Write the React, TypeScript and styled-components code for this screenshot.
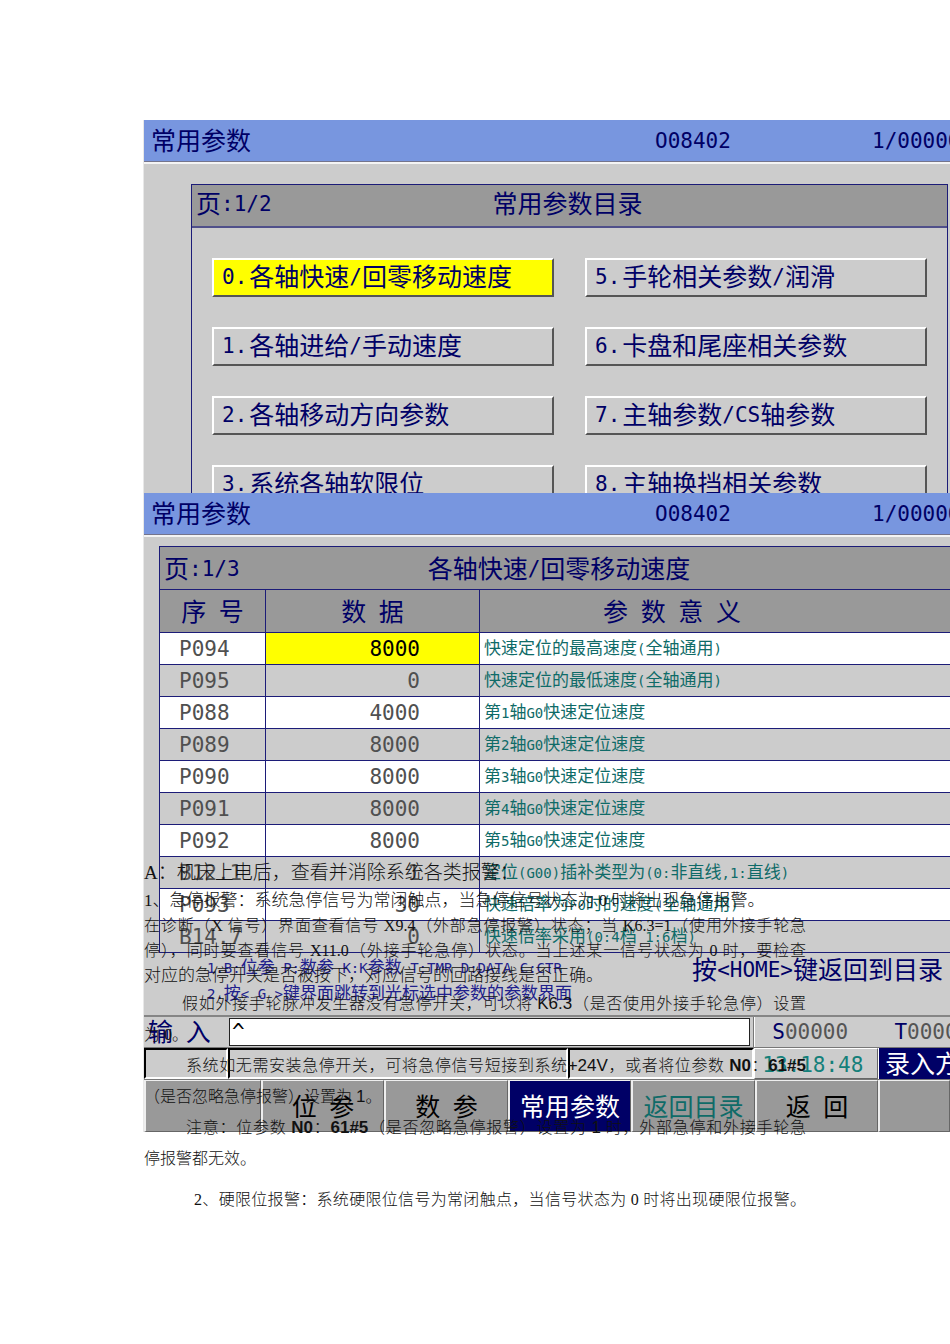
import React from "react";
import styled, { createGlobalStyle, css } from "styled-components";

const navy = "#000066";
const line = "#1c1c78";
const teal = "#0f6b68";
const face = "#cccccc";
const shade = "#999999";

const GlobalStyle = createGlobalStyle`
  *, *::before, *::after { box-sizing: border-box; }
  body { margin: 0; background: #fff; overflow-x: hidden; }
  h1, h2, p { margin: 0; font-weight: inherit; font-size: inherit; }
`;

const Page = styled.div`
  display: grid;
  padding: 120px 0 128px 143px;
  overflow: hidden;
`;

const Screens = styled.div`
  grid-area: 1 / 1;
  min-width: 0;
  color: ${navy};
  font-family: "Noto Sans CJK SC", sans-serif;
  font-size: 25px;
  line-height: 30px;
  white-space: pre;
`;

const Ascii = styled.span<{ $small?: boolean }>`
  font-family: "DejaVu Sans Mono", monospace;
  font-size: ${(p) => (p.$small ? 14 : 21)}px;
  line-height: 1;
  vertical-align: ${(p) => (p.$small ? 0 : 2)}px;
`;

function Lcd({ text, small }: { text: string; small?: boolean }) {
  return (
    <>
      {text.split(/([\x20-\x7e]+)/).map((part, i) =>
        i % 2 ? (
          <Ascii key={i} $small={small}>
            {part}
          </Ascii>
        ) : (
          part
        )
      )}
    </>
  );
}

const Screen = styled.section<{ $clipped?: boolean }>`
  overflow: hidden;
  background: ${face};
  border-left: 1px solid #e8e8e8;
  ${(p) => p.$clipped && css`height: 373px;`}
`;

const TitleBar = styled.header`
  display: grid;
  grid-template-columns: 504fr 217fr 78fr;
  align-items: center;
  height: 44px;
  padding: 0 0 4px 7px;
  background: #7896df;
  border-bottom: 2px solid #f4f4f4;
  box-shadow: inset 0 -1px #74748c;

  > * { min-width: 0; }
`;

const MenuFrame = styled.div`
  margin: 20px 2px 0 47px;
  border: 1px solid ${line};
`;

const MenuHead = styled.div`
  display: grid;
  grid-template-columns: 298fr 457fr;
  align-items: center;
  height: 43px;
  padding: 0 0 8px 4px;
  background: ${shade};
  border-bottom: 2px solid #50508a;
`;

const MenuGrid = styled.div`
  display: grid;
  grid-template-columns: 1fr 1fr;
  gap: 30px 31px;
  padding: 30px 20px;
`;

const MenuButton = styled.button<{ $active?: boolean }>`
  display: flex;
  align-items: center;
  gap: 2px;
  height: 39px;
  padding: 0 0 5px 8px;
  border: 2px solid;
  border-color: #fff #555 #555 #fff;
  background: ${(p) => (p.$active ? "#ffff00" : face)};
  color: ${navy};
  font: inherit;
  text-align: left;
  white-space: pre;
`;

const Table = styled.table`
  width: calc(100% - 15px);
  margin: 9px 0 0 15px;
  border-collapse: collapse;
  table-layout: fixed;

  th, td {
    padding: 0 0 3px;
    border: 1px solid ${line};
    font-weight: 400;
  }
  tr > :last-child { border-right: 0; }
`;

const HeadRow = styled.tr`
  height: 43px;
  background: ${shade};
`;

const TableTitle = styled.div`
  display: grid;
  grid-template-columns: 264fr 523fr;
  padding-left: 4px;
  text-align: left;
`;

const MeaningHead = styled.th`
  && { padding-right: 86px; }
`;

const DataRow = styled.tr`
  height: 32px;
  background: ${face};
  color: #505050;
  line-height: 24px;
  &:nth-child(odd) { background: #fff; }
`;

const IdCell = styled.td`
  && { padding-left: 19px; }
`;

const ValueCell = styled.td<{ $active?: boolean }>`
  && { padding-right: 59px; }
  text-align: right;
  ${(p) => p.$active && css`background: #ffff00; color: #000;`}
`;

const MeaningCell = styled.td`
  && { padding-left: 4px; }
  color: ${teal};
  font-size: 17px;
`;

const Hints = styled.div`
  display: flex;
  justify-content: space-between;
  height: 62px;
  padding: 0 7px 0 63px;
`;

const HintList = styled.div`
  color: #20208c;
  font-size: 17px;
  line-height: 26px;
`;

const EntryRow = styled.div`
  display: grid;
  grid-template-columns: 611fr 196fr;
  height: 32px;
  border-top: 2px solid #858585;
  line-height: 26px;
`;

const Entry = styled.label`
  display: grid;
  grid-template-columns: 81px 1fr;
  padding: 0 3px 0 4px;
  border-right: 1px solid #777;
`;

const EntryInput = styled.input`
  width: 100%;
  height: 28px;
  margin-top: 1px;
  padding: 0 2px;
  border: 1px solid #222;
  border-radius: 0;
  background: #fff;
  color: #000;
  font: 21px "DejaVu Sans Mono", monospace;
`;

const Codes = styled.div`
  display: grid;
  grid-template-columns: minmax(0, 123fr) minmax(0, 56fr);
  padding-left: 17px;
  border-left: 1px solid #fff;
`;

const Digits = styled.span`
  color: #555;
`;

const StatusRow = styled.div`
  display: grid;
  grid-template-columns: 84fr 341fr 186fr 124fr 72fr;
  height: 33px;
  border-top: 1px solid #777;
  border-bottom: 1px solid #777;

  > * { min-width: 0; }
`;

const Well = styled.div`
  border: 2px solid;
  border-color: #000 #fff #fff #000;
`;

const Clock = styled.div`
  padding-left: 7px;
  border: 1px solid;
  border-color: #fff #666 #666 #fff;
  color: #14807a;
  line-height: 28px;
`;

const Mode = styled.div`
  padding-left: 6px;
  overflow: hidden;
  background: ${navy};
  color: #fff;
  border-left: 1px solid #fff;
  line-height: 28px;
`;

const SoftKeys = styled.nav`
  display: grid;
  grid-template-columns: 117fr 123fr 124fr 123fr 124fr 123fr 72fr;
  height: 52px;
`;

const SoftKey = styled.button<{ $active?: boolean; $link?: boolean }>`
  min-width: 0;
  padding: 0 0 3px;
  border: solid;
  border-width: 1px 1px 1px 2px;
  border-color: #eee #666 #666 #eee;
  background: ${(p) => (p.$active ? navy : shade)};
  color: ${(p) => (p.$active ? "#fff" : p.$link ? teal : "#000")};
  font: inherit;
  white-space: pre;
`;

const Notes = styled.article`
  grid-area: 1 / 1;
  z-index: 1;
  min-width: 0;
  padding: 739px 144px 0 1px;
  color: #111;
  font-family: "Liberation Serif", "Noto Sans CJK SC", serif;
  font-weight: 300;
  pointer-events: none;
  white-space: nowrap;
`;

const NotesTitle = styled.h2`
  && { font-size: 19px; }
  height: 29px;
  line-height: 28px;
`;

const Tight = styled.p`
  && { font-size: 17px; }
  line-height: 25px;
`;

const Loose = styled.p<{ $indent?: number }>`
  && { font-size: 16px; }
  line-height: 31px;
  padding-left: ${(p) => p.$indent ?? 0}px;
`;

const Full = styled.span`
  display: block;
  font-size: 16px;
  text-align: justify;
  text-align-last: justify;
  white-space: normal;
`;

const Sans = styled.span`
  font-family: "Liberation Sans", "Noto Sans CJK SC", sans-serif;
  font-size: 17px;
`;

const StrongSans = styled(Sans)`
  font-weight: 700;
`;

const Last = styled(Loose)`
  margin-top: 10px;
`;

const menu = [
  ["0.", "各轴快速/回零移动速度"],
  ["5.", "手轮相关参数/润滑"],
  ["1.", "各轴进给/手动速度"],
  ["6.", "卡盘和尾座相关参数"],
  ["2.", "各轴移动方向参数"],
  ["7.", "主轴参数/CS轴参数"],
  ["3.", "系统各轴软限位"],
  ["8.", "主轴换挡相关参数"],
];

const rows = [
  ["P094", "8000", "快速定位的最高速度(全轴通用)"],
  ["P095", "0", "快速定位的最低速度(全轴通用)"],
  ["P088", "4000", "第1轴G0快速定位速度"],
  ["P089", "8000", "第2轴G0快速定位速度"],
  ["P090", "8000", "第3轴G0快速定位速度"],
  ["P091", "8000", "第4轴G0快速定位速度"],
  ["P092", "8000", "第5轴G0快速定位速度"],
  ["B12.1", "1", "定位(G00)插补类型为(0:非直线,1:直线)"],
  ["P093", "30", "快速倍率为F0时的速度(全轴通用)"],
  ["B14.7", "0", "快速倍率采用(0:4档 1:6档)"],
];

function ScreenTitle() {
  return (
    <TitleBar>
      <h1>常用参数</h1>
      <span><Lcd text="O08402" /></span>
      <span><Lcd text="1/00000" /></span>
    </TitleBar>
  );
}

export default function App() {
  return (
    <Page>
      <GlobalStyle />
      <Screens>
        <Screen $clipped>
          <ScreenTitle />
          <MenuFrame>
            <MenuHead>
              <span><Lcd text="页:1/2" /></span>
              <span>常用参数目录</span>
            </MenuHead>
            <MenuGrid>
              {menu.map(([number, text], i) => (
                <MenuButton key={number} type="button" $active={i === 0}>
                  <span><Lcd text={number} /></span>
                  <span><Lcd text={text} /></span>
                </MenuButton>
              ))}
            </MenuGrid>
          </MenuFrame>
        </Screen>

        <Screen>
          <ScreenTitle />
          <Table>
            <colgroup>
              <col width={106} />
              <col width={214} />
              <col />
            </colgroup>
            <thead>
              <HeadRow>
                <th colSpan={3}>
                  <TableTitle>
                    <span><Lcd text="页:1/3" /></span>
                    <span><Lcd text="各轴快速/回零移动速度" /></span>
                  </TableTitle>
                </th>
              </HeadRow>
              <HeadRow>
                <th><Lcd text="序 号" /></th>
                <th><Lcd text="数 据" /></th>
                <MeaningHead><Lcd text="参 数 意 义" /></MeaningHead>
              </HeadRow>
            </thead>
            <tbody>
              {rows.map(([id, value, meaning], i) => (
                <DataRow key={id}>
                  <IdCell><Lcd text={id} /></IdCell>
                  <ValueCell $active={i === 0}><Lcd text={value} /></ValueCell>
                  <MeaningCell><Lcd text={meaning} small /></MeaningCell>
                </DataRow>
              ))}
            </tbody>
          </Table>
          <Hints>
            <HintList>
              <p><Lcd small text="1.B:位参 P:数参 K:K参数 T:TMR D:DATA C:CTR" /></p>
              <p><Lcd small text="2.按< G >键界面跳转到光标选中参数的参数界面" /></p>
            </HintList>
            <span><Lcd text="按<HOME>键返回到目录" /></span>
          </Hints>
          <EntryRow>
            <Entry>
              <span><Lcd text="输 入" /></span>
              <EntryInput defaultValue="^" />
            </Entry>
            <Codes>
              <span><Lcd text="S" /><Digits><Lcd text="00000" /></Digits></span>
              <span><Lcd text="T" /><Digits><Lcd text="0000" /></Digits></span>
            </Codes>
          </EntryRow>
          <StatusRow>
            <Well />
            <Well />
            <Well />
            <Clock><Lcd text="13:18:48" /></Clock>
            <Mode>录入方式</Mode>
          </StatusRow>
          <SoftKeys>
            <SoftKey type="button" disabled />
            <SoftKey type="button"><Lcd text="位 参" /></SoftKey>
            <SoftKey type="button"><Lcd text="数 参" /></SoftKey>
            <SoftKey type="button" $active>常用参数</SoftKey>
            <SoftKey type="button" $link>返回目录</SoftKey>
            <SoftKey type="button"><Lcd text="返 回" /></SoftKey>
            <SoftKey type="button" disabled />
          </SoftKeys>
        </Screen>
      </Screens>

      <Notes>
        <NotesTitle>A：机床上电后，查看并消除系统各类报警：</NotesTitle>
        <Tight>1、急停报警：系统急停信号为常闭触点，当急停信号状态为 0 时将出现急停报警。</Tight>
        <Tight>
          <Full>在诊断（X 信号）界面查看信号 X9.4（外部急停报警）状态；当 K6.3=1（使用外接手轮急</Full>
          <Full>停），同时要查看信号 X11.0（外接手轮急停）状态。当上述某一信号状态为 0 时，要检查</Full>
          对应的急停开关是否被按下，对应信号的回路接线是否正确。
        </Tight>
        <Loose $indent={38}>
          <Full>
            假如外接手轮脉冲发生器没有急停开关，可以将 <Sans>K6.3</Sans>（是否使用外接手轮急停）设置
          </Full>
        </Loose>
        <Loose>为 0。</Loose>
        <Loose $indent={42}>
          <Full>
            系统如无需安装急停开关，可将急停信号短接到系统<Sans>+24V</Sans>，或者将位参数 <StrongSans>N0</StrongSans>：<StrongSans>61#5</StrongSans>
          </Full>
        </Loose>
        <Loose>（是否忽略急停报警）设置为 <Sans>1</Sans>。</Loose>
        <Loose $indent={42}>
          <Full>
            注意：位参数 <StrongSans>N0</StrongSans>：<StrongSans>61#5</StrongSans>（是否忽略急停报警）设置为 <Sans>1</Sans> 时，外部急停和外接手轮急
          </Full>
        </Loose>
        <Loose>停报警都无效。</Loose>
        <Last $indent={50}>
          <Full>2、硬限位报警：系统硬限位信号为常闭触点，当信号状态为 0 时将出现硬限位报警。</Full>
        </Last>
      </Notes>
    </Page>
  );
}
